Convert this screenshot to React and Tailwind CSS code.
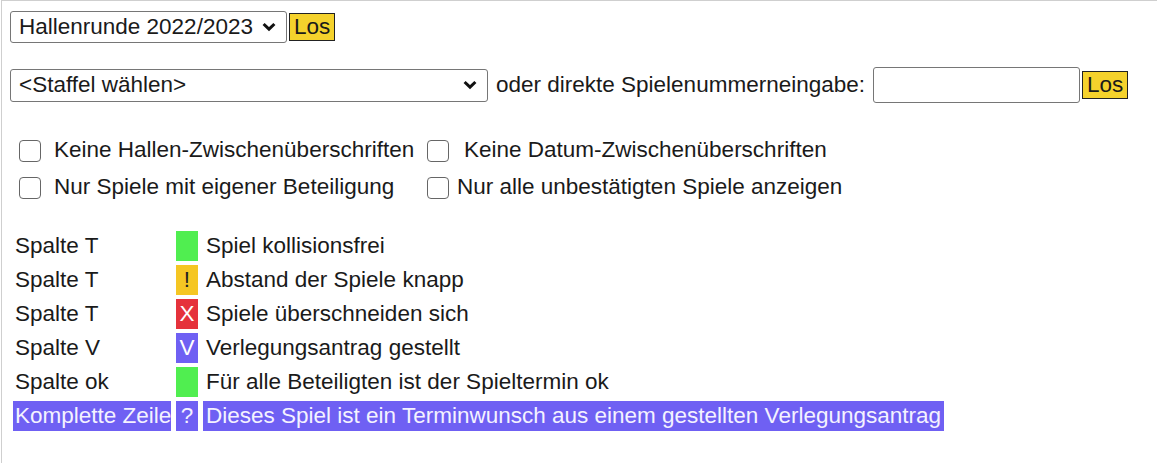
import React from "react";

const Chevron = () => (
  <svg width="14" height="10" viewBox="0 0 14 10" className="shrink-0">
    <path d="M1.6 2 L7 7.2 L12.4 2" fill="none" stroke="#111" strokeWidth="3" />
  </svg>
);

const LosButton = () => (
  <button className="ml-[2px] h-[28px] px-[4px] bg-[#f5d22c] border border-[#222] text-[22.5px] leading-none text-[#1a1a1a]">
    Los
  </button>
);

const Box = () => (
  <span className="inline-block w-[22px] h-[22px] shrink-0 rounded-[4px] border-[1.5px] border-[#666] bg-white" />
);

const legend = [
  { col: "Spalte T", mark: "", bg: "bg-[#50ee50]", markColor: "", text: "Spiel kollisionsfrei" },
  { col: "Spalte T", mark: "!", bg: "bg-[#f5c623]", markColor: "text-[#222]", text: "Abstand der Spiele knapp" },
  { col: "Spalte T", mark: "X", bg: "bg-[#e5323b]", markColor: "text-white", text: "Spiele überschneiden sich" },
  { col: "Spalte V", mark: "V", bg: "bg-[#6f60f3]", markColor: "text-white", text: "Verlegungsantrag gestellt" },
  { col: "Spalte ok", mark: "", bg: "bg-[#50ee50]", markColor: "", text: "Für alle Beteiligten ist der Spieltermin ok" },
];

export default function App() {
  return (
    <div className="ml-px h-[463px] border-t border-l border-[#cfcfcf] bg-white pt-[9px] pl-[8px] font-['Liberation_Sans',Arial,sans-serif] text-[22.5px] text-[#1a1a1a]">
      {/* Saison */}
      <div className="flex items-center h-[34px]">
        <div className="flex items-center justify-between w-[277px] h-[32px] pl-[8px] pr-[10px] border border-[#767676] rounded-[3px] bg-white">
          <span className="leading-none">Hallenrunde 2022/2023</span>
          <Chevron />
        </div>
        <LosButton />
      </div>

      {/* Staffel */}
      <div className="flex items-center h-[36px] mt-[23px]">
        <div className="flex items-center justify-between w-[478px] h-[33px] pl-[8px] pr-[10px] border border-[#767676] rounded-[3px] bg-white">
          <span className="leading-none">&lt;Staffel wählen&gt;</span>
          <Chevron />
        </div>
        <span className="ml-[8px] leading-none">oder direkte Spielenummerneingabe:</span>
        <input className="ml-[8px] w-[207px] h-[36px] border border-[#767676] rounded-[3px] bg-white outline-none" />
        <LosButton />
      </div>

      {/* Optionen */}
      <div className="grid grid-cols-[408px_auto] grid-rows-[37px_37px] items-center ml-[9px] mt-[29px]">
        <label className="flex items-center gap-[13px]">
          <Box />
          <span className="leading-none">Keine Hallen-Zwischenüberschriften</span>
        </label>
        <label className="flex items-center gap-[15px]">
          <Box />
          <span className="leading-none">Keine Datum-Zwischenüberschriften</span>
        </label>
        <label className="flex items-center gap-[13px]">
          <Box />
          <span className="leading-none">Nur Spiele mit eigener Beteiligung</span>
        </label>
        <label className="flex items-center gap-[8px]">
          <Box />
          <span className="leading-none">Nur alle unbestätigten Spiele anzeigen</span>
        </label>
      </div>

      {/* Legende */}
      <div className="grid grid-cols-[158px_22px_auto] gap-x-[5px] gap-y-[4px] auto-rows-[30px] ml-[3px] mt-[25px] leading-[30px]">
        {legend.map((row, i) => (
          <React.Fragment key={i}>
            <div className="pl-[2px]">{row.col}</div>
            <div className={`${row.bg} ${row.markColor} text-center`}>{row.mark}</div>
            <div className="pl-[3px]">{row.text}</div>
          </React.Fragment>
        ))}
        <div className="pl-[2px] bg-[#6f60f3] text-[#f4f2ff] whitespace-nowrap">Komplette Zeile</div>
        <div className="bg-[#6f60f3] text-[#f4f2ff] text-center">?</div>
        <div className="justify-self-start pl-[3px] pr-[3px] bg-[#6f60f3] text-[#f4f2ff] whitespace-nowrap">
          Dieses Spiel ist ein Terminwunsch aus einem gestellten Verlegungsantrag
        </div>
      </div>
    </div>
  );
}
